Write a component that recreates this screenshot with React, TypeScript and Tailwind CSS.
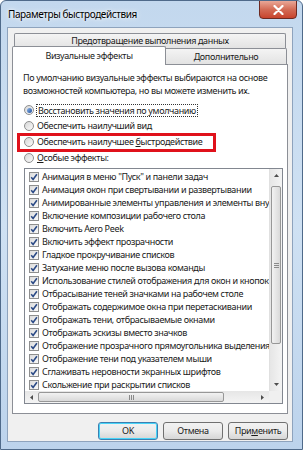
import React from "react";

const items = [
  'Анимация в меню "Пуск" и панели задач',
  "Анимация окон при свертывании и развертывании",
  "Анимированные элементы управления и элементы внутри окна",
  "Включение композиции рабочего стола",
  "Включить Aero Peek",
  "Включить эффект прозрачности",
  "Гладкое прокручивание списков",
  "Затухание меню после вызова команды",
  "Использование стилей отображения для окон и кнопок",
  "Отбрасывание теней значками на рабочем столе",
  "Отображать содержимое окна при перетаскивании",
  "Отображать тени, отбрасываемые окнами",
  "Отображать эскизы вместо значков",
  "Отображение прозрачного прямоугольника выделения",
  "Отображение тени под указателем мыши",
  "Сглаживать неровности экранных шрифтов",
  "Скольжение при раскрытии списков",
];

function Radio({ checked }: { checked?: boolean }) {
  return (
    <div className="w-[10px] h-[10px] rounded-full border border-[#8e8f8f] bg-gradient-to-br from-[#d6d6d6] to-[#fbfbfb] flex items-center justify-center shrink-0">
      {checked && (
        <div className="w-[5px] h-[5px] rounded-full bg-gradient-to-br from-[#8fb6e8] to-[#1f4f9c]" />
      )}
    </div>
  );
}

function Check() {
  return (
    <div className="w-[10px] h-[10px] border border-[#8e8f8f] bg-gradient-to-br from-[#dcdcdc] to-[#fafafa] flex items-center justify-center shrink-0">
      <svg width="8" height="8" viewBox="0 0 8 8">
        <path d="M1.2 4.2 L3.1 6.4 L6.9 1.2" fill="none" stroke="#2b4a86" strokeWidth="1.6" />
      </svg>
    </div>
  );
}

function Arrow({ dir }: { dir: "up" | "down" | "left" | "right" }) {
  const p =
    dir === "up"
      ? "M1 4 L3.5 1 L6 4 Z"
      : dir === "down"
      ? "M1 1 L3.5 4 L6 1 Z"
      : dir === "left"
      ? "M4 1 L1 3.5 L4 6 Z"
      : "M1 1 L4 3.5 L1 6 Z";
  const w = dir === "up" || dir === "down" ? 7 : 5;
  const h = dir === "up" || dir === "down" ? 5 : 7;
  return (
    <svg width={w} height={h} viewBox={`0 0 ${w} ${h}`}>
      <path d={p} fill="#4d4d4d" />
    </svg>
  );
}

export default function App() {
  const font = "font-['Noto_Sans','Open_Sans',sans-serif]";
  return (
    <div
      className={`relative w-[303px] h-[450px] flex flex-col pl-[6px] pr-[9px] pb-[7px] border border-[#4f6a8a] rounded-t-[6px] bg-gradient-to-b from-[#c3d8ee] via-[#cfe1f3] to-[#bcd3ec] ${font} text-[9px] tracking-[-0.35px] text-[#1a1a1a] overflow-hidden`}
    >
      {/* Title bar */}
      <div className="h-[26px] shrink-0 flex items-start justify-between">
        <div className="pt-[6px] pl-[1px] text-[10px] tracking-[-0.4px] text-black [text-shadow:0_0_6px_#ffffff,0_0_3px_#ffffff]">
          Параметры быстродействия
        </div>
        <div className="-mt-px -mr-[4px] w-[38px] h-[19px] rounded-b-[4px] border border-[#6d2a22] bg-gradient-to-b from-[#e9a797] via-[#d36b55] to-[#c8432c] flex items-center justify-center">
          <svg width="11" height="10" viewBox="0 0 11 10">
            <path d="M1.5 1 L9.5 9 M9.5 1 L1.5 9" stroke="#ffffff" strokeWidth="2.2" strokeLinecap="round" />
          </svg>
        </div>
      </div>

      {/* Client area */}
      <div className="flex-1 flex flex-col bg-[#f0f0f0] border border-[#8ea3bd] px-[4px] pt-[5px] overflow-hidden">
        {/* Tabs */}
        <div className="shrink-0 ml-[2px] mr-[2px] h-[15px] border border-b-0 border-[#8c8f96] bg-gradient-to-b from-[#f4f4f4] to-[#e3e3e3] flex items-center justify-center rounded-t-[2px]">
          Предотвращение выполнения данных
        </div>
        <div className="shrink-0 flex h-[18px] -mt-[2px] relative z-10">
          <div className="w-[154px] h-[19px] border border-b-0 border-[#8c8f96] bg-white flex items-center justify-center rounded-t-[2px]">
            Визуальные эффекты
          </div>
          <div className="flex-1 mt-[2px] mr-px h-[16px] border border-l-0 border-b-0 border-[#8c8f96] bg-gradient-to-b from-[#f4f4f4] to-[#e3e3e3] flex items-center justify-center rounded-tr-[2px]">
            Дополнительно
          </div>
        </div>

        {/* Panel */}
        <div className="shrink-0 h-[350px] border border-[#8c8f96] bg-white flex flex-col pl-[11px] pr-[4px] pt-[6px] overflow-hidden">
          <div className="-ml-px leading-[13px] whitespace-nowrap">
            <div>По умолчанию визуальные эффекты выбираются на основе</div>
            <div>возможностей компьютера, но вы можете изменить их.</div>
          </div>
          <div className="mt-[5px] flex flex-col whitespace-nowrap">
            <div className="h-[16px] flex items-center gap-[3px]">
              <Radio checked />
              <span className="border border-dotted border-[#333] leading-[11px] px-px -ml-px">
                Восстановить значения по умолчанию
              </span>
            </div>
            <div className="h-[16px] flex items-center gap-[3px]">
              <Radio />
              <span>Обеспечить наилучший вид</span>
            </div>
            <div className="h-[16px] flex items-center gap-[3px]">
              <Radio />
              <span>
                Обеспечить наилучшее <span className="underline">б</span>ыстродействие
              </span>
            </div>
            <div className="h-[16px] flex items-center gap-[3px]">
              <Radio />
              <span>
                <span className="underline">О</span>собые эффекты:
              </span>
            </div>
          </div>

          {/* List box */}
          <div className="mt-[2px] h-[236px] shrink-0 border border-[#828790] bg-white flex flex-col">
            <div className="flex h-[222px]">
              <div className="flex-1 min-w-0 overflow-hidden pt-px">
                {items.map((t) => (
                  <div key={t} className="h-[13px] flex items-center gap-[3px] pl-[4px] whitespace-nowrap">
                    <Check />
                    <span>{t}</span>
                  </div>
                ))}
              </div>
              {/* vertical scrollbar */}
              <div className="w-[13px] shrink-0 bg-gradient-to-r from-[#e6e6e6] to-[#f4f4f4] border-l border-[#e0e0e0] flex flex-col">
                <div className="h-[13px] flex items-center justify-center">
                  <Arrow dir="up" />
                </div>
                <div className="flex-1 pt-[4px] pb-[34px] px-px">
                  <div className="h-full rounded-[2px] border border-[#979797] bg-gradient-to-r from-[#f2f2f2] to-[#d9d9d9] flex items-center justify-center">
                    <div className="flex flex-col gap-px">
                      <div className="w-[5px] h-px bg-[#8a8a8a]" />
                      <div className="w-[5px] h-px bg-[#8a8a8a]" />
                      <div className="w-[5px] h-px bg-[#8a8a8a]" />
                    </div>
                  </div>
                </div>
                <div className="h-[13px] flex items-center justify-center">
                  <Arrow dir="down" />
                </div>
              </div>
            </div>
            {/* horizontal scrollbar */}
            <div className="flex h-[12px]">
              <div className="flex-1 flex bg-gradient-to-b from-[#e6e6e6] to-[#f4f4f4]">
                <div className="w-[13px] flex items-center justify-center">
                  <Arrow dir="left" />
                </div>
                <div className="w-[186px] py-px">
                  <div className="h-full rounded-[2px] border border-[#979797] bg-gradient-to-b from-[#f2f2f2] to-[#d9d9d9] flex items-center justify-center">
                    <div className="flex gap-px">
                      <div className="w-px h-[5px] bg-[#8a8a8a]" />
                      <div className="w-px h-[5px] bg-[#8a8a8a]" />
                      <div className="w-px h-[5px] bg-[#8a8a8a]" />
                    </div>
                  </div>
                </div>
                <div className="flex-1" />
                <div className="w-[13px] flex items-center justify-center">
                  <Arrow dir="right" />
                </div>
              </div>
              <div className="w-[13px] bg-[#f0f0f0]" />
            </div>
          </div>
        </div>

        {/* Buttons */}
        <div className="shrink-0 mt-[8px] flex justify-end gap-[5px]">
          {["OK", "Отмена", "Применить"].map((b) => (
            <div
              key={b}
              className={`w-[60px] h-[18px] rounded-[3px] border ${
                b === "OK" ? "border-[#3c7fb1] shadow-[inset_0_0_0_1px_#48d4f8]" : "border-[#707070]"
              } bg-gradient-to-b from-[#f2f2f2] via-[#ebebeb] to-[#d6d6d6] flex items-center justify-center`}
            >
              {b === "Применить" ? (
                <span>
                  При<span className="underline">м</span>енить
                </span>
              ) : (
                b
              )}
            </div>
          ))}
        </div>
      </div>

      {/* Red highlight */}
      <div className="absolute left-[16px] top-[132px] w-[199px] h-[19px] border-[3px] border-[#e0111b] pointer-events-none" />
    </div>
  );
}
